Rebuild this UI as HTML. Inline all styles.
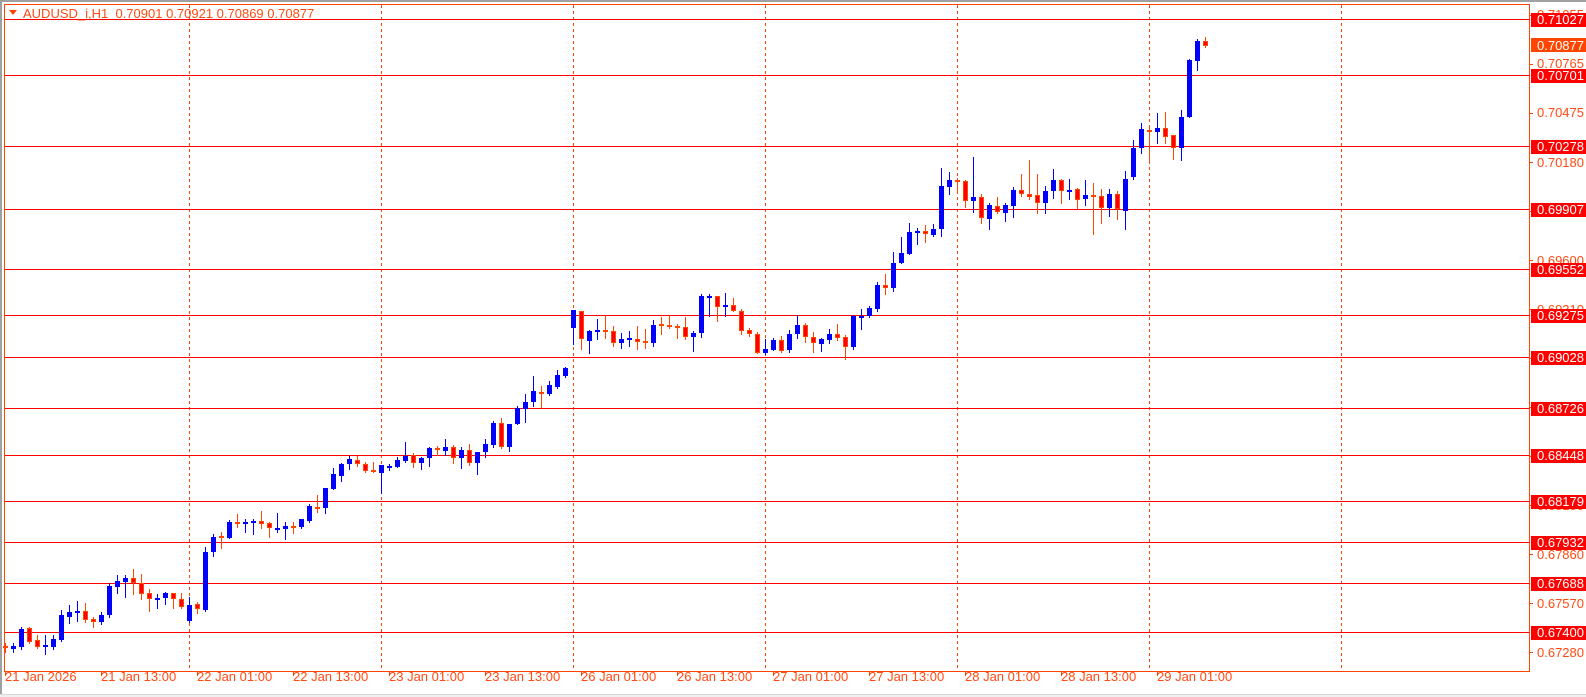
<!DOCTYPE html>
<html><head><meta charset="utf-8"><style>
html,body{margin:0;padding:0;background:#fff;width:1586px;height:697px;overflow:hidden}
svg{display:block}
text{font-family:"Liberation Sans",sans-serif;font-size:13px;white-space:pre}
</style></head><body>
<svg id="s" width="1586" height="697" xmlns="http://www.w3.org/2000/svg">
<rect x="0" y="0" width="1586" height="697" fill="#fff"/>
<rect x="0" y="0" width="1586" height="2" fill="#a0a0a0"/>
<rect x="0" y="0" width="2" height="697" fill="#a0a0a0"/>
<rect x="0" y="694" width="1586" height="3" fill="#f0f0f0"/>
<line x1="0" y1="694.5" x2="1586" y2="694.5" stroke="#d8d8d8"/>
<g id="grid"></g>
<g id="hl"></g>
<g id="c"></g>
<rect x="4.5" y="4.5" width="1525" height="667" fill="none" stroke="#ff4500"/>
<polygon points="9,10 17,10 13,15" fill="#ff4500"/>
<text x="23" y="18" fill="#ff4a12" xml:space="preserve">AUDUSD_i,H1  0.70901 0.70921 0.70869 0.70877</text>
<g id="ax" fill="#ff4a12">
<text x="1537" y="19">0.71055</text>
<text x="1537" y="68">0.70765</text>
<text x="1537" y="117">0.70475</text>
<text x="1537" y="167">0.70180</text>
<text x="1537" y="216">0.69890</text>
<text x="1537" y="265">0.69600</text>
<text x="1537" y="314">0.69310</text>
<text x="1537" y="363">0.69020</text>
<text x="1537" y="412">0.68730</text>
<text x="1537" y="461">0.68440</text>
<text x="1537" y="510">0.68150</text>
<text x="1537" y="559">0.67860</text>
<text x="1537" y="608">0.67570</text>
<text x="1537" y="657">0.67280</text>
</g>
<g id="tl" fill="#ff4a12">
<text x="5" y="681">21 Jan 2026</text>
<text x="101" y="681">21 Jan 13:00</text>
<text x="197" y="681">22 Jan 01:00</text>
<text x="293" y="681">22 Jan 13:00</text>
<text x="389" y="681">23 Jan 01:00</text>
<text x="485" y="681">23 Jan 13:00</text>
<text x="581" y="681">26 Jan 01:00</text>
<text x="677" y="681">26 Jan 13:00</text>
<text x="773" y="681">27 Jan 01:00</text>
<text x="869" y="681">27 Jan 13:00</text>
<text x="965" y="681">28 Jan 01:00</text>
<text x="1061" y="681">28 Jan 13:00</text>
<text x="1157" y="681">29 Jan 01:00</text>
</g>
<g id="lb"></g>
<g id="lbt" fill="#fff">
<text x="1537" y="24">0.71027</text>
<text x="1537" y="50">0.70877</text>
<text x="1537" y="80">0.70701</text>
<text x="1537" y="151">0.70278</text>
<text x="1537" y="214">0.69907</text>
<text x="1537" y="274">0.69552</text>
<text x="1537" y="320">0.69275</text>
<text x="1537" y="362">0.69028</text>
<text x="1537" y="413">0.68726</text>
<text x="1537" y="460">0.68448</text>
<text x="1537" y="506">0.68179</text>
<text x="1537" y="547">0.67932</text>
<text x="1537" y="588">0.67688</text>
<text x="1537" y="637">0.67400</text>
</g>
</svg>
<script>
var NS="http://www.w3.org/2000/svg";
function el(p,t,a){var e=document.createElementNS(NS,t);for(var k in a)e.setAttribute(k,a[k]);document.getElementById(p).appendChild(e);return e;}
[189,381,573,765,957,1149,1341].forEach(function(x){el("grid","line",{x1:x+.5,y1:5,x2:x+.5,y2:671,stroke:"#ff4500","stroke-dasharray":"3,3"});});
for(var x=5;x<=1157;x+=96){el("grid","line",{x1:x+.5,y1:671,x2:x+.5,y2:676,stroke:"#ff4500"});}
var ys=[15,64,113,162,211,260,309,358,407,456,505,554,603,652];
ys.forEach(function(y){el("grid","line",{x1:1529,y1:y+.5,x2:1533,y2:y+.5,stroke:"#ff4500"});});
var L=[19,75,146,209,269,315,357,408,455,501,542,583,632];
L.forEach(function(y){el("hl","line",{x1:5,y1:y+.5,x2:1529,y2:y+.5,stroke:"#ff0000"});el("lb","rect",{x:1531,y:y-6,width:55,height:14,fill:"#ff0000"});});
el("lb","rect",{x:1531,y:38,width:55,height:14,fill:"#ff4500"});
var D="r 646 648 643 652|b 646 649 643 652|b 629 647 627 649|r 628 642 627 643|r 640 647 635 648|b 645 647 635 654|b 639 647 635 649|b 615 640 610 641|b 612 617 605 623|b 611 613 601 621|r 611 620 603 622|r 619 622 617 627|b 615 622 612 624|b 586 615 583 617|b 581 587 575 593|b 578 582 575 597|r 578 583 569 594|r 583 594 574 599|r 593 599 589 611|b 598 599 594 608|b 593 598 592 604|r 593 599 593 608|r 599 607 593 608|b 605 621 597 622|r 604 609 602 613|b 552 610 547 611|b 537 552 534 556|r 536 538 532 548|b 522 538 520 538|r 522 524 514 527|b 522 524 519 532|b 521 523 519 534|r 521 524 511 528|r 523 528 522 537|b 528 529 513 532|b 526 529 522 539|r 526 528 522 533|b 519 527 519 528|b 506 521 504 522|r 507 508 495 512|b 488 508 488 513|b 474 489 468 489|b 464 476 463 481|b 459 464 456 469|r 460 464 456 466|r 464 471 462 472|r 470 471 462 472|b 465 473 465 493|b 466 468 464 470|b 460 467 457 467|b 456 461 442 462|r 455 463 453 467|b 458 463 457 469|b 448 458 447 466|r 448 450 446 455|b 447 451 439 455|r 447 458 445 463|b 450 458 447 468|r 450 463 444 465|b 452 463 452 474|b 444 452 439 457|b 423 445 421 447|r 423 447 418 448|b 424 447 424 451|b 408 424 406 424|b 402 409 394 422|b 391 402 376 406|r 392 394 386 407|b 385 394 381 395|b 375 387 370 388|b 368 376 367 377|b 310 328 310 344|r 311 339 311 349|b 331 341 330 353|b 330 332 319 339|r 330 332 315 338|r 331 343 326 346|b 339 343 333 348|b 338 340 331 346|r 339 342 326 349|r 341 343 329 348|b 325 343 320 346|r 324 326 317 334|r 325 327 315 328|r 326 327 324 338|r 327 337 317 339|b 333 337 331 351|b 296 333 294 337|b 296 297 294 316|r 296 307 296 321|b 305 307 293 316|r 305 311 298 311|r 311 331 309 334|r 330 334 328 336|r 334 353 332 353|b 349 353 339 354|b 340 350 338 350|r 340 351 336 352|b 334 350 330 352|b 325 334 315 338|r 325 337 323 342|r 337 343 332 352|b 339 344 338 351|b 334 340 329 343|r 334 338 324 340|r 337 347 335 359|b 316 347 315 349|b 316 318 309 329|b 308 316 306 317|b 285 309 282 311|r 285 288 274 294|b 263 288 252 291|b 253 263 237 263|b 232 254 223 254|b 231 232 228 244|r 231 234 225 242|b 229 235 224 236|b 186 229 168 236|b 180 187 172 194|r 180 182 178 193|r 181 201 180 207|b 197 201 157 212|r 197 218 194 223|b 205 219 203 229|r 206 212 197 213|b 205 213 203 221|b 190 206 187 217|r 190 194 174 196|r 194 197 160 199|r 195 203 174 213|b 191 203 186 213|b 180 191 169 198|r 180 191 179 203|b 190 192 179 199|r 189 200 188 208|b 195 199 180 205|r 195 197 183 234|r 196 208 189 223|b 194 208 189 216|r 194 209 191 219|b 179 211 171 229|b 148 177 140 179|b 129 148 123 153|r 130 132 128 163|b 128 132 113 143|r 128 137 112 143|r 135 148 135 159|b 117 148 110 160|b 60 117 59 117|b 41 61 39 70|r 41 46 37 47";
D.split("|").forEach(function(s,i){var a=s.split(" "),c=a[0],t=+a[1],b=+a[2],wt=+a[3],wb=+a[4],cx=5+8*i;
var col=c=="b"?"#0000ff":"#ff4500";
el("c","line",{x1:cx+.5,y1:wt,x2:cx+.5,y2:wb+1,stroke:col});
var h=Math.max(b-t,2);
if(c=="b"){el("c","rect",{x:cx-2,y:t,width:5,height:h,fill:"#0000ff"});}
else{ if(h<=2){el("c","rect",{x:cx-2,y:t,width:5,height:2,fill:"#ff4500"});}
 else el("c","rect",{x:cx-1.5,y:t+.5,width:4,height:h-1,fill:"#ff0000",stroke:"#ff4500"});}
});
</script>
</body></html>
